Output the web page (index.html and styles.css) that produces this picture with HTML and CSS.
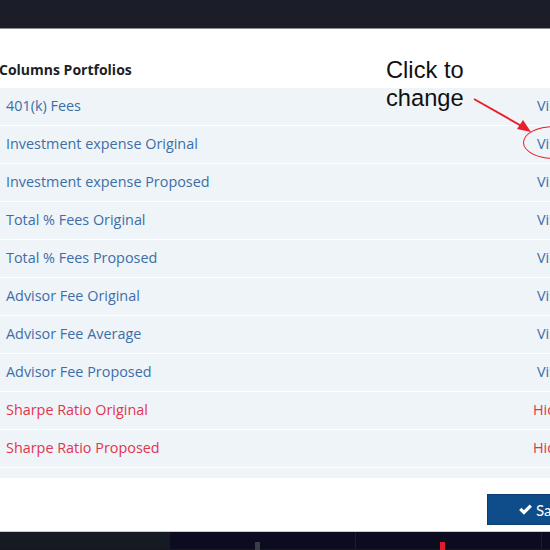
FILE: index.html
```html
<!DOCTYPE html>
<html>
<head>
<meta charset="utf-8">
<link rel="stylesheet" href="styles.css">
</head>
<body>
<div class="topbar"></div>
<div class="modal">
  <div class="title">Columns Portfolios</div>
  <div class="rows">
    <div class="row"><span class="name">401(k) Fees</span><span class="state">Visible</span></div>
    <div class="row circled"><span class="name">Investment expense Original</span><span class="state">Visible</span></div>
    <div class="row"><span class="name">Investment expense Proposed</span><span class="state">Visible</span></div>
    <div class="row"><span class="name">Total % Fees Original</span><span class="state">Visible</span></div>
    <div class="row"><span class="name">Total % Fees Proposed</span><span class="state">Visible</span></div>
    <div class="row"><span class="name">Advisor Fee Original</span><span class="state">Visible</span></div>
    <div class="row"><span class="name">Advisor Fee Average</span><span class="state">Visible</span></div>
    <div class="row"><span class="name">Advisor Fee Proposed</span><span class="state">Visible</span></div>
    <div class="row hidden"><span class="name">Sharpe Ratio Original</span><span class="state">Hidden</span></div>
    <div class="row hidden"><span class="name">Sharpe Ratio Proposed</span><span class="state">Hidden</span></div>
    <div class="row hidden"><span class="name">Sortino Ratio Original</span><span class="state">Hidden</span></div>
  </div>
  <div class="footer">
    <button class="save"><svg class="check" viewBox="0 0 16 16" width="15" height="15"><path d="M1.2 8.6 L3.7 6.1 L6.3 8.7 L12.4 2.6 L14.9 5.1 L6.3 13.7 Z" fill="#fff"/></svg>Save</button>
  </div>
  <div class="note">Click to<br>change</div>
  <svg class="arrow" width="80" height="70" viewBox="0 0 80 70">
    <line x1="3" y1="2" x2="54" y2="31" stroke="#e8202a" stroke-width="2"/>
    <path d="M60 35 L46 32 L52 23 Z" fill="#e8202a"/>
  </svg>
  <div class="ring"></div>
</div>
<div class="bottombar">
  <div class="seg a"></div><div class="seg c"><i class="tick t1"></i><i class="tick t2"></i><i class="rule r1"></i><i class="rule r2"></i></div>
</div>
</body>
</html>
```

FILE: styles.css
```css
html, body {
  margin: 0;
  padding: 0;
  width: 550px;
  height: 550px;
  overflow: hidden;
  background: #151821;
  font-family: "Open Sans", "Noto Sans", sans-serif;
}
.topbar {
  height: 28px;
  background: #1b1e29;
  border-bottom: 1px solid #8a8c92;
}
.modal {
  position: relative;
  height: 502px;
  background: #fff;
  border-bottom: 1px solid #c9cbd0;
  display: flex;
  flex-direction: column;
}
.title {
  padding-top: 33px;
  height: 26px;
  line-height: 16px;
  font-size: 14px;
  font-weight: 700;
  color: #1d1f24;
  margin-left: -1px;
}
.rows {
  height: 390px;
  overflow: hidden;
  display: flex;
  flex-direction: column;
  gap: 1px;
}
.row {
  flex: 0 0 37px;
  background: #eff4f8;
  display: flex;
  align-items: center;
  justify-content: space-between;
  font-size: 14.4px;
  line-height: 18px;
  padding-bottom: 1px;
  box-sizing: border-box;
  color: #3d6ea7;
  padding-left: 6px;
}
.row .state {
  margin-right: -38px;
  width: 51px;
}
.row.hidden {
  color: #e2344f;
}
.row.hidden .state {
  margin-right: -38px;
  width: 55px;
}
.footer {
  display: flex;
  justify-content: flex-end;
  padding-top: 16px;
}
.save {
  width: 90px;
  margin-right: -27px;
  height: 31px;
  background: #0e4d89;
  border: 1px solid #0a3f70;
  color: #fff;
  font-family: "Lato", sans-serif;
  font-size: 15px;
  display: flex;
  align-items: center;
  padding: 0 0 0 30px;
  gap: 3px;
}
.check {
  display: block;
}
.note {
  position: absolute;
  left: 386px;
  top: 27px;
  font-family: "Liberation Sans", Arial, sans-serif;
  font-size: 23.7px;
  line-height: 28px;
  color: #111;
}
.arrow {
  position: absolute;
  left: 471px;
  top: 68px;
}
.ring {
  position: absolute;
  left: 523px;
  top: 97px;
  width: 60px;
  height: 31px;
  border: 1.5px solid #e8202a;
  border-radius: 50%;
}
.bottombar {
  height: 17px;
  display: flex;
}
.seg.a { width: 170px; background: #161a22; }
.seg.c { flex: 1; background: #0c0b20; position: relative; }
.tick { position: absolute; top: 10px; width: 5px; height: 8px; background: #3a3c45; }
.tick.t1 { left: 85px; }
.tick.t2 { left: 270px; background: #e11d2d; }
.rule { position: absolute; top: 0; width: 1px; height: 17px; background: #1d1c30; }
.rule.r1 { left: 185px; }
.rule.r2 { left: 371px; }
```
